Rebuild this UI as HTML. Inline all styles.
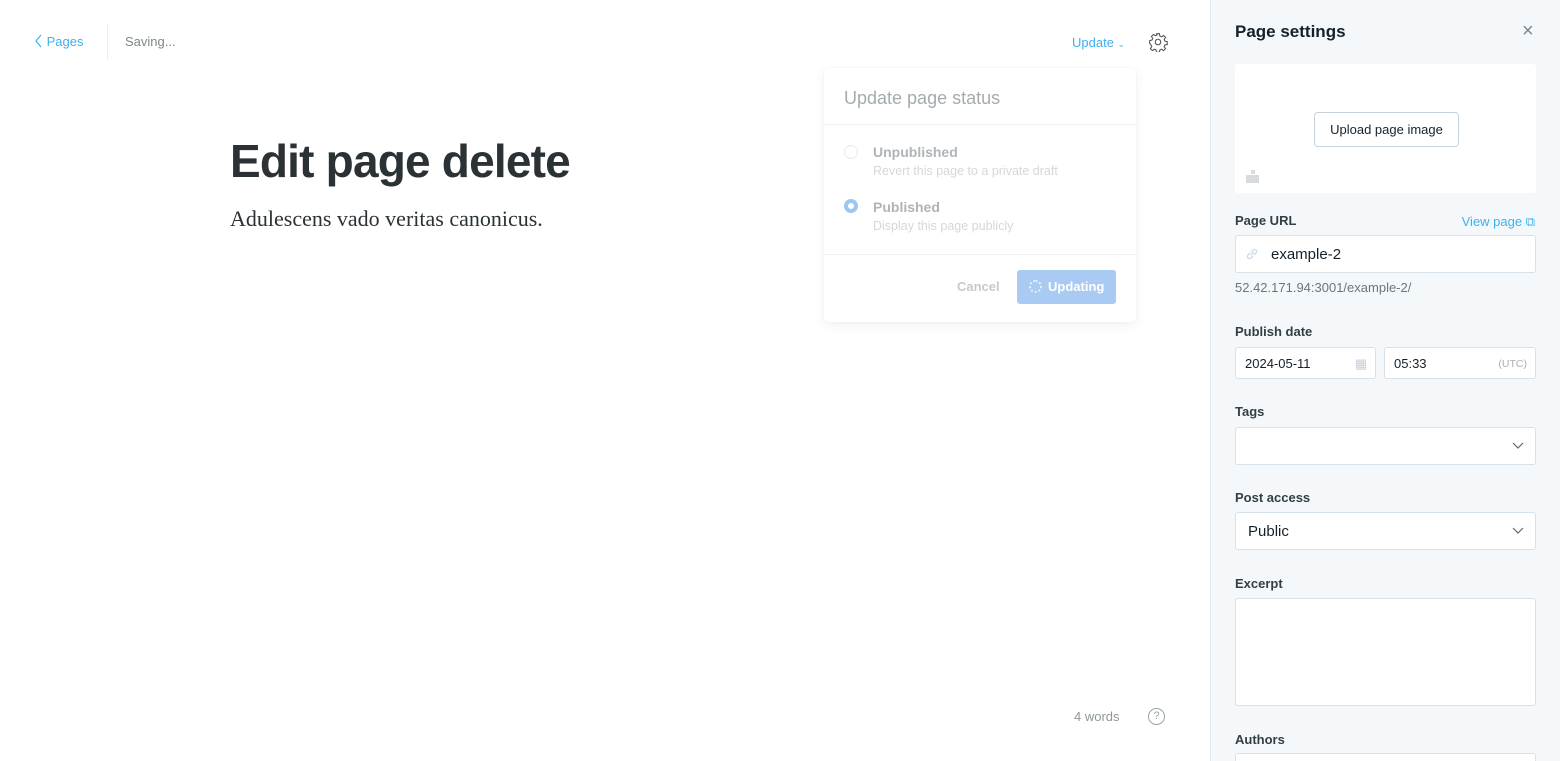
<!DOCTYPE html>
<html style="overflow:hidden;height:761px"><head><style>
*{box-sizing:border-box;margin:0;padding:0}
body{width:1560px;height:761px;overflow:hidden;background:#fff;font-family:"Liberation Sans",sans-serif;position:relative;color:#15212a}
.a{position:absolute}
.side{left:1210px;top:0;width:350px;height:761px;background:#f4f8fb;border-left:1px solid #e3ebf3;overflow:hidden}
.lbl{font-size:13px;font-weight:bold;color:#343f44;position:absolute;left:24px}
.inp{position:absolute;left:24px;width:301px;background:#fff;border:1px solid #d6e1ea;border-radius:3px}
</style></head><body>
<div class="a" style="left:34px;top:34px;font-size:13px;color:#3eb0ef">
<svg width="9" height="14" viewBox="0 0 9 14" style="vertical-align:-2px"><path d="M7 1L2 7l5 6" fill="none" stroke="#3eb0ef" stroke-width="1.2"/></svg> Pages</div>
<div class="a" style="left:107px;top:24px;width:1px;height:36px;background:#e5eff5"></div>
<div class="a" style="left:125px;top:34px;font-size:13px;color:#7d878a">Saving...</div>
<div class="a" style="left:1072px;top:35px;font-size:13px;color:#3eb0ef">Update <span style="font-size:9px">&#8964;</span></div>
<svg class="a" style="left:1148px;top:32px" width="20" height="20" viewBox="0 0 24 24" fill="none" stroke="#555" stroke-width="1.3"><circle cx="12" cy="12" r="3.3"/><path d="M10.3 2h3.4l.5 2.8 2 1 2.4-1.6 2.4 2.4-1.6 2.4.9 2 2.8.6v3.4l-2.8.5-.9 2 1.6 2.4-2.4 2.4-2.4-1.6-2 .9-.5 2.8h-3.4l-.6-2.8-2-.9-2.4 1.6-2.4-2.4 1.6-2.4-.9-2L2 13.7v-3.4l2.8-.6.9-2-1.6-2.4 2.4-2.4 2.4 1.6 2-.9z"/></svg>
<div class="a" style="left:230px;top:134px;font-size:46px;font-weight:bold;color:#2b3236;letter-spacing:-0.8px">Edit page delete</div>
<div class="a" style="left:230px;top:206px;font-size:22px;font-family:'Liberation Serif',serif;color:#2b3236">Adulescens vado veritas canonicus.</div>
<div class="a" style="left:824px;top:68px;width:312px;height:254px;background:#fff;border-radius:4px;box-shadow:0 0 1px rgba(0,0,0,.1),0 4px 12px rgba(0,0,0,.06)">
<div style="padding:20px 20px 0;height:57px;font-size:18px;color:#a4abaf;border-bottom:1px solid #f0f3f5">Update page status</div>
<div class="a" style="left:20px;top:77px;width:14px;height:14px;border:1px solid #e4ebf1;border-radius:50%"></div>
<div class="a" style="left:49px;top:76px;font-size:14px;font-weight:bold;color:#aeb4b7">Unpublished</div>
<div class="a" style="left:49px;top:96px;font-size:12.5px;color:#d3d8db">Revert this page to a private draft</div>
<div class="a" style="left:20px;top:131px;width:14px;height:14px;background:#9fc5f2;border-radius:50%"><div style="margin:4px;width:6px;height:6px;background:#fff;border-radius:50%"></div></div>
<div class="a" style="left:49px;top:131px;font-size:14px;font-weight:bold;color:#aeb4b7">Published</div>
<div class="a" style="left:49px;top:151px;font-size:12.5px;color:#d3d8db">Display this page publicly</div>
<div class="a" style="left:0;top:186px;width:312px;height:1px;background:#f0f3f5"></div>
<div class="a" style="left:133px;top:211px;font-size:13px;font-weight:bold;color:#c5cacd">Cancel</div>
<div class="a" style="left:193px;top:202px;width:99px;height:34px;background:#a8caf3;border-radius:3px;color:#fff;font-size:13px;font-weight:bold;line-height:34px;padding-left:31px">Updating</div>
<div class="a" style="left:205px;top:212px;width:13px;height:13px;border:2px dotted #e4effc;border-radius:50%"></div>
</div>
<div class="a" style="left:1074px;top:709px;font-size:13px;color:#8e979b">4 words</div>
<div class="a" style="left:1148px;top:708px;width:17px;height:17px;border:1px solid #9aa3a7;border-radius:50%;font-size:11px;color:#9aa3a7;text-align:center;line-height:15px">?</div>
<div class="a side">
<div class="a" style="left:24px;top:22px;font-size:17px;font-weight:bold;color:#15212a">Page settings</div>
<div class="a" style="left:311px;top:20px;font-size:20px;color:#7d878a;font-weight:300">&#215;</div>
<div class="a" style="left:24px;top:64px;width:301px;height:129px;background:#fff;border-radius:3px">
<div class="a" style="left:79px;top:48px;width:145px;height:35px;border:1px solid #c5d2db;border-radius:4px;font-size:13px;color:#15212a;text-align:center;line-height:33px">Upload page image</div>
<div class="a" style="left:11px;top:111px;width:13px;height:8px;background:#d8dbde"></div><div class="a" style="left:16px;top:106px;width:4px;height:4px;background:#d8dbde"></div>
</div>
<div class="lbl" style="top:213px">Page URL</div>
<div class="a" style="right:25px;top:214px;font-size:13px;color:#3eb0ef">View page &#10697;</div>
<div class="inp" style="top:235px;height:38px;font-size:15px;padding:10px 0 0 35px">example-2</div>
<svg class="a" style="left:34px;top:247px" width="14" height="14" viewBox="0 0 14 14" fill="none" stroke="#c8dcee" stroke-width="1.3"><path d="M6 8l3-3M5 6L3 8a2 2 0 003 3l2-2M9 8l2-2a2 2 0 00-3-3L6 5"/></svg>
<div class="a" style="left:24px;top:280px;font-size:13px;color:#6c767a">52.42.171.94:3001/example-2/</div>
<div class="lbl" style="top:324px">Publish date</div>
<div class="inp" style="top:347px;width:141px;height:32px;font-size:13px;padding:8px 0 0 9px">2024-05-11<span style="float:right;margin-right:8px;color:#ccd">&#9638;</span></div>
<div class="inp" style="left:173px;top:347px;width:152px;height:32px;font-size:13px;padding:8px 0 0 9px">05:33<span style="float:right;margin-right:8px;color:#a8b0b4;font-size:10.5px;margin-top:2px">(UTC)</span></div>
<div class="lbl" style="top:404px">Tags</div>
<div class="inp" style="top:427px;height:38px"><svg class="a" style="right:11px;top:14px" width="12" height="8" viewBox="0 0 12 8"><path d="M1 1l5 5 5-5" fill="none" stroke="#666" stroke-width="1.2"/></svg></div>
<div class="lbl" style="top:490px">Post access</div>
<div class="inp" style="top:512px;height:38px;font-size:15px;padding:10px 0 0 12px">Public<svg class="a" style="right:11px;top:14px" width="12" height="8" viewBox="0 0 12 8"><path d="M1 1l5 5 5-5" fill="none" stroke="#666" stroke-width="1.2"/></svg></div>
<div class="lbl" style="top:576px">Excerpt</div>
<div class="inp" style="top:598px;height:108px"></div>
<div class="lbl" style="top:732px">Authors</div>
<div class="inp" style="top:753px;height:8px;border-bottom:none;border-radius:3px 3px 0 0"></div>
</div>
</body></html>
